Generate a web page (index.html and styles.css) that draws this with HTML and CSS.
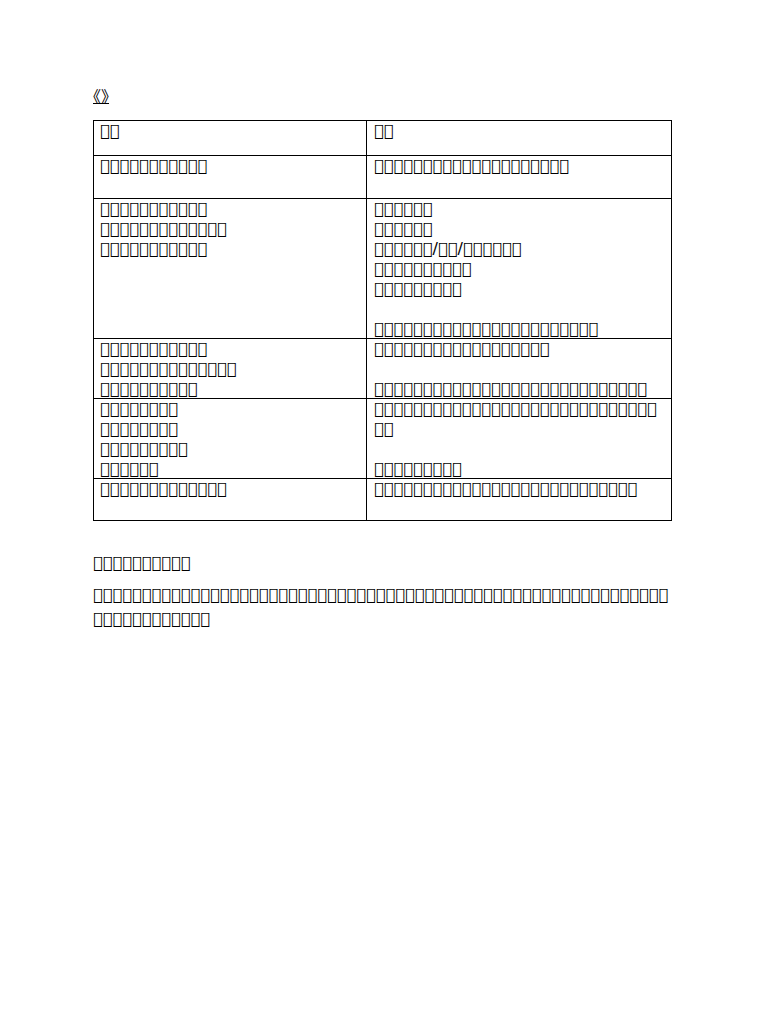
FILE: index.html
```html
<!DOCTYPE html>
<html lang="zh">
<head>
<meta charset="utf-8">
<title>文档</title>
<link rel="stylesheet" href="styles.css">
</head>
<body>
<main class="page">
  <p class="title"><span class="title-text">《》</span></p>

  <div class="tbl">
    <div class="cell left r1"><p>&#x30101;&#x30102;</p></div>
    <div class="cell right r1"><p>&#x30111;&#x30112;</p></div>

    <div class="cell left r2"><p>&#x30201;&#x30202;&#x30203;&#x30204;&#x30205;&#x30206;&#x30207;&#x30208;&#x30209;&#x3020A;&#x3020B;</p></div>
    <div class="cell right r2"><p>&#x30211;&#x30212;&#x30213;&#x30214;&#x30215;&#x30216;&#x30217;&#x30218;&#x30219;&#x3021A;&#x3021B;&#x3021C;&#x3021D;&#x3021E;&#x3021F;&#x30220;&#x30221;&#x30222;&#x30223;&#x30224;</p></div>

    <div class="cell left r3">
      <p>&#x30301;&#x30302;&#x30303;&#x30304;&#x30305;&#x30306;&#x30307;&#x30308;&#x30309;&#x3030A;&#x3030B;</p>
      <p>&#x30311;&#x30312;&#x30313;&#x30314;&#x30315;&#x30316;&#x30317;&#x30318;&#x30319;&#x3031A;&#x3031B;&#x3031C;&#x3031D;</p>
      <p>&#x30321;&#x30322;&#x30323;&#x30324;&#x30325;&#x30326;&#x30327;&#x30328;&#x30329;&#x3032A;&#x3032B;</p>
    </div>
    <div class="cell right r3">
      <p>&#x30331;&#x30332;&#x30333;&#x30334;&#x30335;&#x30336;</p>
      <p>&#x30341;&#x30342;&#x30343;&#x30344;&#x30345;&#x30346;</p>
      <p>&#x30351;&#x30352;&#x30353;&#x30354;&#x30355;&#x30356;/&#x30357;&#x30358;/&#x30359;&#x3035A;&#x3035B;&#x3035C;&#x3035D;&#x3035E;</p>
      <p>&#x30361;&#x30362;&#x30363;&#x30364;&#x30365;&#x30366;&#x30367;&#x30368;&#x30369;&#x3036A;</p>
      <p>&#x30381;&#x30382;&#x30383;&#x30384;&#x30385;&#x30386;&#x30387;&#x30388;&#x30389;</p>
      <p class="blank">&nbsp;</p>
      <p>&#x30381;&#x30382;&#x30383;&#x30384;&#x30385;&#x30386;&#x30387;&#x30388;&#x30389;&#x3038A;&#x3038B;&#x3038C;&#x3038D;&#x3038E;&#x3038F;&#x30390;&#x30391;&#x30392;&#x30393;&#x30394;&#x30395;&#x30396;&#x30397;</p>
    </div>

    <div class="cell left r4">
      <p>&#x30401;&#x30402;&#x30403;&#x30404;&#x30405;&#x30406;&#x30407;&#x30408;&#x30409;&#x3040A;&#x3040B;</p>
      <p>&#x30411;&#x30412;&#x30413;&#x30414;&#x30415;&#x30416;&#x30417;&#x30418;&#x30419;&#x3041A;&#x3041B;&#x3041C;&#x3041D;&#x3041E;</p>
      <p>&#x30421;&#x30422;&#x30423;&#x30424;&#x30425;&#x30426;&#x30427;&#x30428;&#x30429;&#x3042A;</p>
    </div>
    <div class="cell right r4">
      <p>&#x30431;&#x30432;&#x30433;&#x30434;&#x30435;&#x30436;&#x30437;&#x30438;&#x30439;&#x3043A;&#x3043B;&#x3043C;&#x3043D;&#x3043E;&#x3043F;&#x30440;&#x30441;&#x30442;</p>
      <p class="blank">&nbsp;</p>
      <p>&#x30451;&#x30452;&#x30453;&#x30454;&#x30455;&#x30456;&#x30457;&#x30458;&#x30459;&#x3045A;&#x3045B;&#x3045C;&#x3045D;&#x3045E;&#x3045F;&#x30460;&#x30461;&#x30462;&#x30463;&#x30464;&#x30465;&#x30466;&#x30467;&#x30468;&#x30469;&#x3046A;&#x3046B;&#x3046C;</p>
    </div>

    <div class="cell left r5">
      <p>&#x30501;&#x30502;&#x30503;&#x30504;&#x30505;&#x30506;&#x30507;&#x30508;</p>
      <p>&#x30511;&#x30512;&#x30513;&#x30514;&#x30515;&#x30516;&#x30517;&#x30518;</p>
      <p>&#x30521;&#x30522;&#x30523;&#x30524;&#x30525;&#x30526;&#x30527;&#x30528;&#x30529;</p>
      <p>&#x30531;&#x30532;&#x30533;&#x30534;&#x30535;&#x30536;</p>
    </div>
    <div class="cell right r5">
      <p class="wrap">&#x30541;&#x30542;&#x30543;&#x30544;&#x30545;&#x30546;&#x30547;&#x30548;&#x30549;&#x3054A;&#x3054B;&#x3054C;&#x3054D;&#x3054E;&#x3054F;&#x30550;&#x30551;&#x30552;&#x30553;&#x30554;&#x30555;&#x30556;&#x30557;&#x30558;&#x30559;&#x3055A;&#x3055B;&#x3055C;&#x3055D;&#x3055E;&#x3055F;</p>
      <p class="blank">&nbsp;</p>
      <p>&#x30561;&#x30562;&#x30563;&#x30564;&#x30565;&#x30566;&#x30567;&#x30568;&#x30569;</p>
    </div>

    <div class="cell left r6"><p>&#x30601;&#x30602;&#x30603;&#x30604;&#x30605;&#x30606;&#x30607;&#x30608;&#x30609;&#x3060A;&#x3060B;&#x3060C;&#x3060D;</p></div>
    <div class="cell right r6"><p>&#x30611;&#x30612;&#x30613;&#x30614;&#x30615;&#x30616;&#x30617;&#x30618;&#x30619;&#x3061A;&#x3061B;&#x3061C;&#x3061D;&#x3061E;&#x3061F;&#x30620;&#x30621;&#x30622;&#x30623;&#x30624;&#x30625;&#x30626;&#x30627;&#x30628;&#x30629;&#x3062A;&#x3062B;</p></div>
  </div>

  <h2 class="heading">&#x30701;&#x30702;&#x30703;&#x30704;&#x30705;&#x30706;&#x30707;&#x30708;&#x30709;&#x3070A;</h2>
  <p class="para wrap">&#x30801;&#x30802;&#x30803;&#x30804;&#x30805;&#x30806;&#x30807;&#x30808;&#x30809;&#x3080A;&#x3080B;&#x3080C;&#x3080D;&#x3080E;&#x3080F;&#x30810;&#x30811;&#x30812;&#x30813;&#x30814;&#x30815;&#x30816;&#x30817;&#x30818;&#x30819;&#x3081A;&#x3081B;&#x3081C;&#x3081D;&#x3081E;&#x3081F;&#x30820;&#x30821;&#x30822;&#x30823;&#x30824;&#x30825;&#x30826;&#x30827;&#x30828;&#x30829;&#x3082A;&#x3082B;&#x3082C;&#x3082D;&#x3082E;&#x3082F;&#x30830;&#x30831;&#x30832;&#x30833;&#x30834;&#x30835;&#x30836;&#x30837;&#x30838;&#x30839;&#x3083A;&#x3083B;&#x3083C;&#x3083D;&#x3083E;&#x3083F;&#x30840;&#x30841;&#x30842;&#x30843;&#x30844;&#x30845;&#x30846;&#x30847;</p>
</main>
</body>
</html>
```

FILE: styles.css
```css
html, body {
  margin: 0;
  padding: 0;
  background: #ffffff;
}

body {
  font-family: "DejaVu Sans", "Noto Sans CJK SC", sans-serif;
  font-size: 16px;
  line-height: 20px;
  letter-spacing: 0.15px;
  color: #000000;
}

.page {
  width: 582px;
  padding: 87px 0 0 93px;
}

p {
  margin: 0;
}

.title {
  line-height: 20px;
  letter-spacing: 0;
}

.title-text {
  text-decoration: underline;
  font-feature-settings: "halt";
}

.wrap {
  word-break: break-all;
}

.tbl {
  display: grid;
  grid-template-columns: 273px 304px;
  grid-template-rows: 34px 43px 140px 60px 80px 42px;
  width: 577px;
  margin-top: 13px;
  border: 1px solid #000000;
}

.cell {
  min-height: 0;
}

.left {
  border-right: 1px solid #000000;
  padding: 0 6px;
}

.right {
  padding: 0 7px;
}

.r2, .r3, .r4, .r5, .r6 {
  border-top: 1px solid #000000;
}

.heading {
  margin: 32px 0 0 0;
  font-size: 16px;
  font-weight: normal;
  line-height: 20px;
}

.para {
  margin-top: 10px;
  line-height: 24px;
}
```
